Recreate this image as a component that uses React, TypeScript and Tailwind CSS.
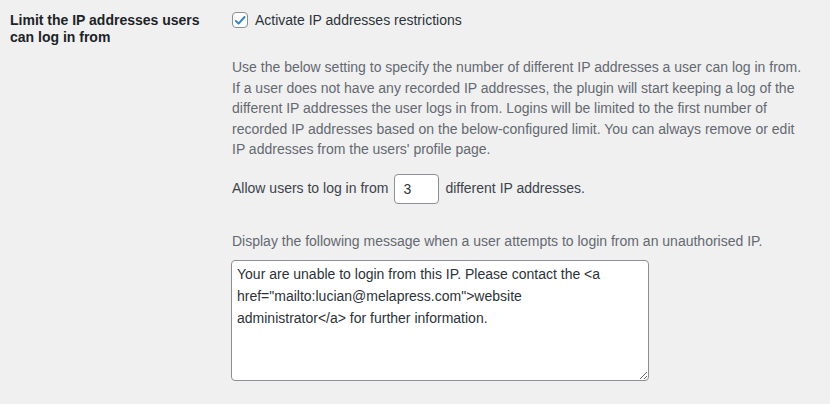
import React, { useState } from 'react';

export default function App() {
  const [enabled, setEnabled] = useState(true);
  const [limit, setLimit] = useState('3');
  const [message, setMessage] = useState(
    'Your are unable to login from this IP. Please contact the <a href="mailto:lucian@melapress.com">website administrator</a> for further information.'
  );

  return (
    <div
      className="w-[830px] h-[404px] bg-[#f0f0f1] text-[14px] text-[#3c434a] overflow-hidden"
      style={{ fontFamily: '"Segoe UI", "Liberation Sans", Arial, sans-serif' }}
    >
      <div className="flex pt-[10px]">
        {/* Label column */}
        <div className="w-[232px] shrink-0 pl-[10px] pr-[20px]">
          <p className="font-semibold text-[#1d2327] leading-[17px] pt-[2px]">
            Limit the IP addresses users
            <br />
            can log in from
          </p>
        </div>

        {/* Field column */}
        <div className="flex-1 pr-[10px]">
          <label className="flex items-center gap-[7px] h-[20px] cursor-pointer">
            <span
              onClick={() => setEnabled(!enabled)}
              className="w-[16px] h-[16px] rounded-[4px] border border-[#8c8f94] bg-white flex items-center justify-center"
            >
              {enabled && (
                <svg width="15" height="15" viewBox="0 0 20 20">
                  <path d="M4 10.5l4 4L16.5 5" fill="none" stroke="#3582c4" strokeWidth="2.8" strokeLinecap="round" strokeLinejoin="round" />
                </svg>
              )}
            </span>
            <span className="text-[#2c3338]">Activate IP addresses restrictions</span>
          </label>

          <p className="mt-[27px] text-[#646970] leading-[20.5px] whitespace-nowrap">
            Use the below setting to specify the number of different IP addresses a user can log in from.
            <br />
            If a user does not have any recorded IP addresses, the plugin will start keeping a log of the
            <br />
            different IP addresses the user logs in from. Logins will be limited to the first number of
            <br />
            recorded IP addresses based on the below-configured limit. You can always remove or edit
            <br />
            IP addresses from the users' profile page.
          </p>

          <div className="mt-[14px] flex items-center gap-[6px] text-[#3c434a]">
            <span>Allow users to log in from</span>
            <input
              value={limit}
              onChange={(e) => setLimit(e.target.value)}
              className="w-[45px] h-[30px] px-[8px] bg-white border border-[#8c8f94] rounded-[4px] text-[#2c3338] outline-none"
            />
            <span>different IP addresses.</span>
          </div>

          <p className="mt-[27px] text-[#646970] leading-[20px]">
            Display the following message when a user attempts to login from an unauthorised IP.
          </p>

          <textarea
            value={message}
            onChange={(e) => setMessage(e.target.value)}
            className="block mt-[9px] -ml-[1px] w-[418px] h-[121px] pl-[5px] pr-[16px] py-[2px] bg-white border border-[#8c8f94] rounded-[4px] text-[#2c3338] leading-[22px] outline-none resize"
            style={{ fontFamily: '"Segoe UI", "Liberation Sans", Arial, sans-serif', fontSize: 14 }}
          />
        </div>
      </div>
    </div>
  );
}
